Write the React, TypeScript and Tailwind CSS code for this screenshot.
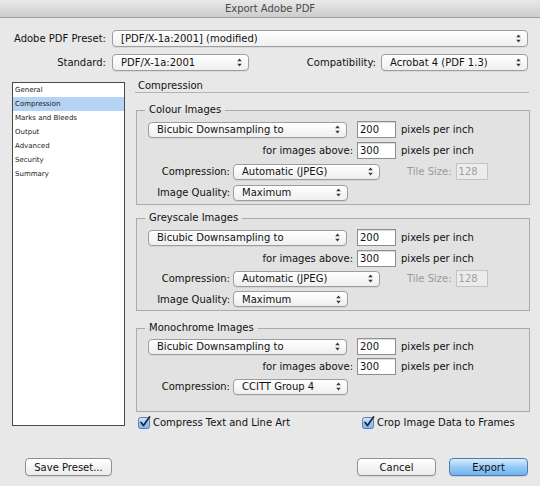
import React from "react";

function Arrows() {
  return (
    <svg width="5" height="9" viewBox="0 0 5 9" className="shrink-0">
      <path d="M2.5 0.5 L4.8 3.3 L0.2 3.3 Z M0.2 5.7 L4.8 5.7 L2.5 8.5 Z" fill="#3a3a3a" />
    </svg>
  );
}

function Sel({ className, children }: { className: string; children: React.ReactNode }) {
  return (
    <div
      className={
        "flex items-center justify-between rounded-[4px] border border-[#9d9d9d] bg-linear-to-b from-white to-[#efefef] pl-[8px] pr-[6px] shadow-[0_1px_0_rgba(0,0,0,0.06)] " +
        className
      }
    >
      <span className="whitespace-nowrap">{children}</span>
      <Arrows />
    </div>
  );
}

function Input({ className, children, disabled }: { className: string; children: React.ReactNode; disabled?: boolean }) {
  return (
    <div
      className={
        "flex h-[17px] items-center pl-[2px] " +
        (disabled
          ? "border border-[#c4c4c4] bg-[#ececec] text-[#a0a0a0] "
          : "border border-[#8e8e8e] bg-white shadow-[inset_0_1px_1px_rgba(0,0,0,0.15)] ") +
        className
      }
    >
      {children}
    </div>
  );
}

function Check() {
  return (
    <svg width="13" height="13" viewBox="0 0 13 13" className="shrink-0">
      <defs>
        <linearGradient id="cb" x1="0" y1="0" x2="0" y2="1">
          <stop offset="0" stopColor="#d6ebfd" />
          <stop offset="0.5" stopColor="#9ccbf5" />
          <stop offset="1" stopColor="#7ab7ef" />
        </linearGradient>
      </defs>
      <rect x="0.5" y="1.5" width="11" height="11" rx="2" fill="url(#cb)" stroke="#5b7ea6" />
      <path d="M3 6.5 L5.5 9.5 L11.5 1" fill="none" stroke="#1b2a48" strokeWidth="1.8" strokeLinecap="round" strokeLinejoin="round" />
    </svg>
  );
}

function DownRows() {
  return (
    <>
      <div className="flex h-[17px] items-center">
        <Sel className="h-[16px] w-[199px]">Bicubic Downsampling to</Sel>
        <Input className="ml-[10px] w-[39px]">200</Input>
        <span className="ml-[5px] whitespace-nowrap">pixels per inch</span>
      </div>
      <div className="flex h-[17px] items-center">
        <span className="w-[205px] text-right whitespace-nowrap">for images above:</span>
        <Input className="ml-[4px] w-[39px]">300</Input>
        <span className="ml-[5px] whitespace-nowrap">pixels per inch</span>
      </div>
    </>
  );
}

function JpegRows() {
  return (
    <>
      <div className="flex h-[17px] items-center">
        <span className="w-[82px] text-right whitespace-nowrap">Compression:</span>
        <Sel className="ml-[3px] h-[16px] w-[147px]">Automatic (JPEG)</Sel>
        <span className="ml-[27px] whitespace-nowrap text-[#9a9a9a]">Tile Size:</span>
        <Input disabled className="ml-[4px] w-[32px]">128</Input>
      </div>
      <div className="flex h-[17px] items-center">
        <span className="w-[82px] text-right whitespace-nowrap">Image Quality:</span>
        <Sel className="ml-[3px] h-[16px] w-[115px]">Maximum</Sel>
      </div>
    </>
  );
}

export default function App() {
  const items = ["General", "Compression", "Marks and Bleeds", "Output", "Advanced", "Security", "Summary"];
  return (
    <div className="flex h-[486px] w-[540px] flex-col overflow-hidden bg-[#e8e8e8] font-['DejaVu_Sans',sans-serif] text-[10px] text-[#111]">
      {/* title bar */}
      <div className="h-[18px] border-b border-[#9e9e9e] bg-linear-to-b from-[#e9e9e9] to-[#cdcdcd] text-center leading-[17px] text-[#4a4a4a]">
        Export Adobe PDF
      </div>

      {/* preset row */}
      <div className="mt-[12px] flex h-[17px] items-center">
        <span className="w-[106px] text-right whitespace-nowrap">Adobe PDF Preset:</span>
        <Sel className="ml-[6px] h-[17px] w-[416px]">[PDF/X-1a:2001] (modified)</Sel>
      </div>
      <div className="mt-[7px] flex h-[17px] items-center">
        <span className="w-[106px] text-right whitespace-nowrap">Standard:</span>
        <Sel className="ml-[6px] h-[17px] w-[137px]">PDF/X-1a:2001</Sel>
        <span className="w-[127px] text-right whitespace-nowrap">Compatibility:</span>
        <Sel className="ml-[5px] h-[17px] w-[147px]">Acrobat 4 (PDF 1.3)</Sel>
      </div>

      {/* body */}
      <div className="mt-[9px] flex items-start">
        <div className="ml-[12px] mt-[2px] h-[344px] w-[113px] border border-[#4a4a4a] bg-white text-[7px] text-[#222]">
          {items.map((it) => (
            <div
              key={it}
              className={
                "flex h-[14px] items-center pl-[2px] whitespace-nowrap " + (it === "Compression" ? "bg-[#b5d3f3]" : "")
              }
            >
              {it}
            </div>
          ))}
        </div>

        <div className="ml-[10px] flex w-[395px] flex-col">
          <div className="h-[13px] w-[394px] border-b border-[#b3b3b3] pl-[3px] leading-[12px]">Compression</div>

          <fieldset className="mt-[11px] ml-[1px] w-[394px] border border-[#ababab] bg-[#e2e2e2] pt-[5px] pb-[3px] pl-[11px]">
            <legend className="-ml-[3px] px-[4px] leading-[12px]">Colour Images</legend>
            <div className="flex flex-col gap-[4px]">
              <DownRows />
              <JpegRows />
            </div>
          </fieldset>

          <fieldset className="mt-[7px] ml-[1px] w-[394px] border border-[#ababab] bg-[#e2e2e2] pt-[5px] pb-[2.5px] pl-[11px]">
            <legend className="-ml-[3px] px-[4px] leading-[12px]">Greyscale Images</legend>
            <div className="flex flex-col gap-[3.5px]">
              <DownRows />
              <JpegRows />
            </div>
          </fieldset>

          <fieldset className="mt-[11px] ml-[1px] w-[394px] border border-[#ababab] bg-[#e2e2e2] pt-[4px] pb-[16px] pl-[11px]">
            <legend className="-ml-[3px] px-[4px] leading-[12px]">Monochrome Images</legend>
            <div className="flex flex-col gap-[3px]">
              <DownRows />
              <div className="flex h-[17px] items-center">
                <span className="w-[82px] text-right whitespace-nowrap">Compression:</span>
                <Sel className="ml-[3px] h-[16px] w-[115px]">CCITT Group 4</Sel>
              </div>
            </div>
          </fieldset>

          <div className="mt-[3px] flex h-[14px] items-center pl-[3px]">
            <div className="flex w-[224px] items-center gap-[2px]">
              <Check />
              <span className="whitespace-nowrap">Compress Text and Line Art</span>
            </div>
            <div className="flex items-center gap-[2px]">
              <Check />
              <span className="whitespace-nowrap">Crop Image Data to Frames</span>
            </div>
          </div>
        </div>
      </div>

      {/* buttons */}
      <div className="mt-auto mb-[10px] flex items-center justify-between pl-[25px] pr-[12px]">
        <button className="h-[18px] w-[87px] rounded-[4px] border border-[#8f8f8f] bg-linear-to-b from-white to-[#ebebeb] text-[10px] shadow-[0_1px_0_rgba(0,0,0,0.08)]">
          Save Preset...
        </button>
        <div className="flex gap-[13px]">
          <button className="h-[18px] w-[79px] rounded-[4px] border border-[#8f8f8f] bg-linear-to-b from-white to-[#ebebeb] text-[10px] shadow-[0_1px_0_rgba(0,0,0,0.08)]">
            Cancel
          </button>
          <button className="h-[18px] w-[79px] rounded-[4px] border border-[#4f7bb5] bg-linear-to-b from-[#d9ecfd] via-[#97caf5] to-[#6fb4f0] text-[10px] shadow-[0_1px_0_rgba(0,0,0,0.1)]">
            Export
          </button>
        </div>
      </div>
    </div>
  );
}
